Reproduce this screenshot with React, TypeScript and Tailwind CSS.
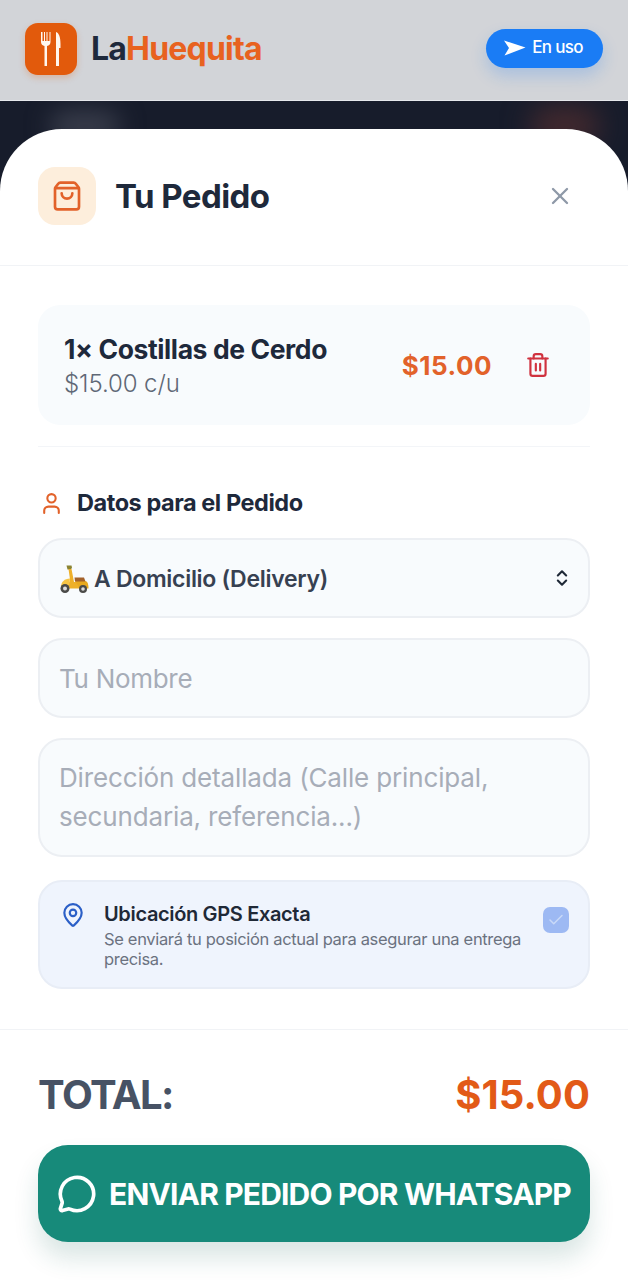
import { Check, ChevronsUpDown, MapPin, MessageCircle, ShoppingBag, Trash2, User, X } from 'lucide-react'

function ForkKnife() {
  return (
    <svg width="20" height="36" viewBox="0 0 20 36" fill="none">
      <path d="M0 1v10c0 2.500 1.500 3.500 3.500 4v20h2.500V15c2-.5 3.500-1.500 3.500-4V1h-1v9H6.500V1h-1v9H4V1H3v9H1.500V1z" fill="#fff6ee" />
      <path d="M15 1c3 1 4.500 5 4.500 12v4H18v18h-3z" fill="#fff6ee" />
    </svg>
  )
}

function SendArrow() {
  return (
    <svg width="23" height="16" viewBox="0 0 23 16">
      <path d="M1 .5 22.500 7.500 1.500 15.500 6 8z" fill="#fff" />
    </svg>
  )
}

function Scooter() {
  return (
    <svg width="30" height="30" viewBox="0 0 30 30" className="shrink-0">
      <path d="M7.500 1.500h5l.5 2.500-1.500 1.500h-3z" fill="#8a8433" />
      <path d="M9.500 5h3l2.500 13h6.500l1 6.500H8.500c-.5-4 2.500-6 2.500-9z" fill="#eeb02a" />
      <path d="M2 23c0-5 3.500-8.500 9-8.500l-1 8.500z" fill="#f6c445" />
      <path d="M16 17h10c2.500 0 3.500 3 3.500 7.500H21z" fill="#e8a91f" />
      <path d="M15.500 13.500h9.500l1.500 4H16z" fill="#a4622a" />
      <circle cx="6" cy="24.500" r="4.500" fill="#4a4a48" />
      <circle cx="6" cy="24.500" r="2" fill="#dcdcdc" />
      <circle cx="24" cy="25" r="4" fill="#4a4a48" />
      <circle cx="24" cy="25" r="1.800" fill="#dcdcdc" />
    </svg>
  )
}

export default function App() {
  return (
    <div className="h-[1280px] w-[628px] flex flex-col overflow-hidden font-['Inter',sans-serif]">
      {/* Cabecera */}
      <header className="h-[101px] shrink-0 bg-[#d2d4d8] border-b border-b-[#e6e8ec] flex items-center justify-between pl-[25px] pr-[25px] pb-[3px]">
        <div className="flex items-center gap-[14px]">
          <div className="w-[52px] h-[52px] rounded-[13px] bg-[#e25a0c] flex items-center justify-center shadow-[0_3px_6px_rgba(226,90,12,0.25)]">
            <ForkKnife />
          </div>
          <div className="text-[32px] font-bold tracking-[-0.8px] leading-none">
            <span className="text-[#1e293b]">La</span>
            <span className="text-[#e8621f]">Huequita</span>
          </div>
        </div>
        <div className="w-[117px] h-[39px] rounded-full bg-[#1a7cf5] flex items-center justify-center gap-[6px] pr-[3px] shadow-[0_8px_16px_rgba(26,124,245,0.22)] mb-[1px]">
          <SendArrow />
          <span className="text-[17px] font-medium text-white tracking-[-0.7px]">En uso</span>
        </div>
      </header>

      {/* Fondo oscuro y hoja */}
      <main className="relative flex-1 bg-[#171c2b] pt-[28px] overflow-hidden">
        <div className="absolute left-[50px] top-[10px] w-[70px] h-[30px] rounded-full bg-[#3a3e4c] blur-[12px]" />
        <div className="absolute left-[530px] top-[5px] w-[70px] h-[40px] rounded-full bg-[#43292e] blur-[14px]" />

        <div className="relative h-full bg-white rounded-t-[62px] flex flex-col">
          <div className="h-[137px] shrink-0 border-b border-b-[#f1f3f6] flex items-center justify-between pl-[38px] pr-[54px] pb-[2px]">
            <div className="flex items-center gap-[19px]">
              <div className="w-[58px] h-[58px] rounded-[17px] bg-[#fdeedc] flex items-center justify-center">
                <ShoppingBag size={32} strokeWidth={2} className="text-[#e2622a]" />
              </div>
              <h1 className="text-[33px] font-bold text-[#1e293b] tracking-[-0.55px] pt-[2px]">Tu Pedido</h1>
            </div>
            <X size={28} strokeWidth={2} className="text-[#8f99a8]" />
          </div>

          <div className="px-[38px] pt-[39px]">
            {/* Producto */}
            <div className="h-[120px] rounded-[22px] bg-[#f8fbfd] flex items-center justify-between pl-[26px] pr-[39px]">
              <div className="pt-[3px]">
                <div className="text-[26.500px] leading-[34px] font-bold text-[#1e293b] tracking-[-0.4px]">1× Costillas de Cerdo</div>
                <div className="text-[24px] leading-[36px] font-light text-[#5f6876] tracking-[-0.1px]">$15.00 c/u</div>
              </div>
              <div className="flex items-center gap-[33px]">
                <span className="text-[26px] font-bold text-[#e2622a] tracking-[0.5px] ml-[1px]">$15.00</span>
                <Trash2 size={26} strokeWidth={2} className="text-[#d0323f]" />
              </div>
            </div>

            <div className="h-px bg-[#f3f5f8] mt-[21px]" />

            {/* Datos */}
            <div className="flex items-center gap-[13px] mt-[41px] ml-[1px] h-[30px]">
              <User size={25} strokeWidth={2} className="text-[#e2622a]" />
              <h2 className="text-[23.500px] font-bold text-[#1e293b] tracking-[-0.45px]">Datos para el Pedido</h2>
            </div>

            <div className="mt-[20px] flex flex-col gap-[20px]">
              <div className="h-[80px] rounded-[24px] border-2 border-[#eceff3] bg-[#f8fbfd] flex items-center justify-between pl-[19px] pr-[16px]">
                <div className="flex items-center gap-[5px] pt-[2px]">
                  <Scooter />
                  <span className="text-[23px] font-semibold text-[#374151] tracking-[-0.3px]">A Domicilio (Delivery)</span>
                </div>
                <ChevronsUpDown size={20} strokeWidth={2.500} className="text-[#1f2937]" />
              </div>

              <input
                placeholder="Tu Nombre"
                className="h-[80px] rounded-[24px] border-2 border-[#eceff3] bg-[#f8fbfd] px-[19px] text-[26px] tracking-[-0.3px] placeholder:text-[#a7adb8]"
              />

              <textarea
                rows={2}
                placeholder="Dirección detallada (Calle principal, secundaria, referencia...)"
                className="h-[119px] resize-none rounded-[24px] border-2 border-[#eceff3] bg-[#f8fbfd] px-[19px] py-[18px] text-[26px] leading-[39px] tracking-[-0.15px] placeholder:text-[#a7adb8]"
              />
            </div>

            {/* GPS */}
            <div className="mt-[23px] h-[109px] rounded-[24px] border-2 border-[#e8edf6] bg-[#eff4fd] flex items-start pl-[20px] pr-[19px] pt-[20px]">
              <MapPin size={26} strokeWidth={2} className="text-[#2b5fc7] shrink-0" />
              <div className="ml-[18px] flex-1">
                <div className="text-[20px] leading-[24px] font-semibold text-[#1f2937] tracking-[-0.35px]">Ubicación GPS Exacta</div>
                <div className="text-[16.500px] leading-[20px] text-[#6b7280] tracking-[-0.33px] mt-[3px] w-[425px]">
                  Se enviará tu posición actual para asegurar una entrega precisa.
                </div>
              </div>
              <div className="w-[26px] h-[26px] mt-[5px] rounded-[7px] bg-[#9db9f3] flex items-center justify-center shrink-0">
                <Check size={18} strokeWidth={2} className="text-[#c9d9f8]" />
              </div>
            </div>
          </div>

          {/* Total */}
          <div className="mt-[40px] border-t border-t-[#f1f3f6] px-[38px] pt-[38px]">
            <div className="flex items-center justify-between h-[54px]">
              <span className="text-[40px] font-bold text-[#475264] tracking-[-1.5px]">TOTAL:</span>
              <span className="text-[40px] font-bold text-[#e25a17] tracking-[0.1px]">$15.00</span>
            </div>
            <button className="mt-[23px] w-full h-[97px] rounded-[30px] bg-[#178a7a] flex items-center justify-center gap-[12px] shadow-[0_16px_24px_rgba(23,100,90,0.16)]">
              <MessageCircle size={40} strokeWidth={2.200} className="text-white shrink-0" />
              <span className="text-[30px] font-bold text-white tracking-[-0.85px] whitespace-nowrap pt-[1px]">ENVIAR PEDIDO POR WHATSAPP</span>
            </button>
          </div>
        </div>
      </main>
    </div>
  )
}
